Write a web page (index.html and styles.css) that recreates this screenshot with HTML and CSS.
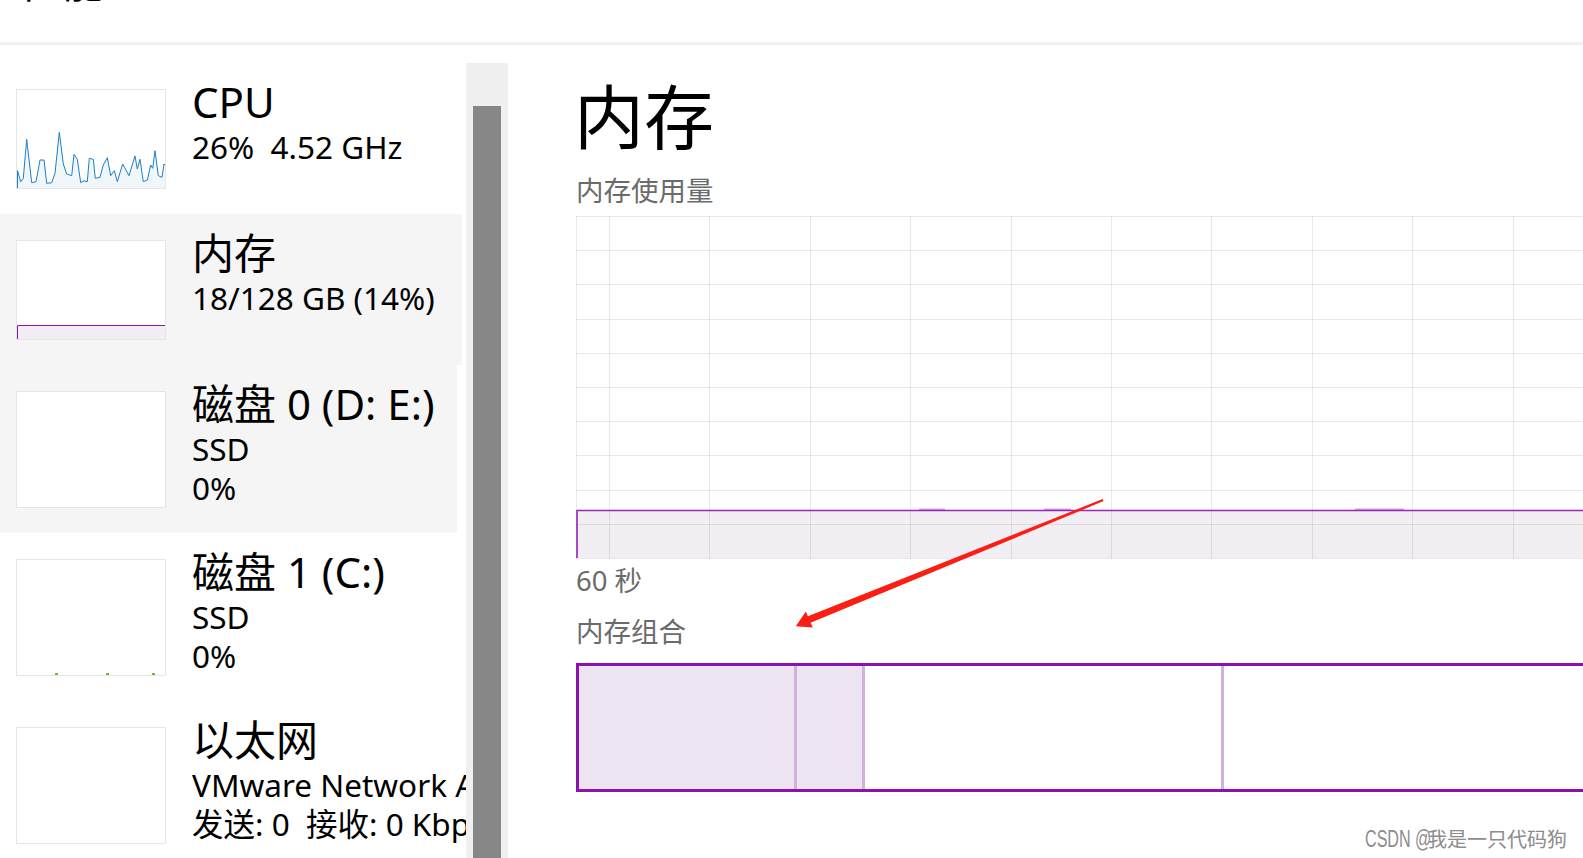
FILE: index.html
```html
<!DOCTYPE html>
<html lang="zh-CN">
<head>
<meta charset="utf-8">
<title>任务管理器 - 性能</title>
<link rel="stylesheet" href="styles.css">
</head>
<body>
<header class="topbar">
  <div class="page-title">性能</div>
</header>
<main class="content">
  <aside class="sidebar">
    <div class="device-list">
      <div class="device">
        <div class="thumb">
          <svg class="thumb-svg" viewBox="0 0 148 98" preserveAspectRatio="none">
            <polygon class="cpu-fill" points="0,80.7 3.7,91.7 6.3,88.3 9.7,49.3 14.7,92.7 19,91.7 23,70 27,70 29.7,93.3 34.7,92.7 38,83.3 42.3,42.3 46.3,74 49.7,84 54.7,85.7 57,64.3 60.3,69.3 63.7,92.7 67,90.7 70.3,91.7 72.3,68.3 76.3,69.3 78.3,88.3 83,87.3 86.3,75 90.3,67.7 93.7,85.7 97.3,80.7 100.3,91.7 105.7,74 112,85.7 118,66 120.3,79 123,69.3 126.3,91.7 130.3,90 133.7,75 135.7,78.3 138,60.7 141.3,85.7 145,87.3 147,74 148,75 148,98 0,98"/>
            <polyline class="cpu-line" points="0.5,98 0.5,80.7 3.7,91.7 6.3,88.3 9.7,49.3 14.7,92.7 19,91.7 23,70 27,70 29.7,93.3 34.7,92.7 38,83.3 42.3,42.3 46.3,74 49.7,84 54.7,85.7 57,64.3 60.3,69.3 63.7,92.7 67,90.7 70.3,91.7 72.3,68.3 76.3,69.3 78.3,88.3 83,87.3 86.3,75 90.3,67.7 93.7,85.7 97.3,80.7 100.3,91.7 105.7,74 112,85.7 118,66 120.3,79 123,69.3 126.3,91.7 130.3,90 133.7,75 135.7,78.3 138,60.7 141.3,85.7 145,87.3 147,74 148,75"/>
          </svg>
        </div>
        <div class="device-text">
          <div class="device-name">CPU</div>
          <div class="device-line">26%&nbsp; 4.52 GHz</div>
        </div>
      </div>

      <div class="device is-selected">
        <div class="thumb">
          <svg class="thumb-svg" viewBox="0 0 148 98" preserveAspectRatio="none">
            <rect class="mem-fill" x="0" y="84.5" width="148" height="14"/>
            <polyline class="mem-line" points="0.5,98 0.5,84.5 148,84.5"/>
          </svg>
        </div>
        <div class="device-text">
          <div class="device-name">内存</div>
          <div class="device-line">18/128 GB (14%)</div>
        </div>
      </div>

      <div class="device is-hover">
        <div class="thumb thumb-tall"></div>
        <div class="device-text">
          <div class="device-name">磁盘 0 (D: E:)</div>
          <div class="device-line">SSD</div>
          <div class="device-line">0%</div>
        </div>
      </div>

      <div class="device">
        <div class="thumb thumb-tall">
          <svg class="thumb-svg" viewBox="0 0 148 115" preserveAspectRatio="none">
            <rect class="disk-dot" x="38" y="113" width="3" height="2"/>
            <rect class="disk-dot" x="89" y="113" width="3" height="2"/>
            <rect class="disk-dot" x="135" y="113" width="3" height="2"/>
          </svg>
        </div>
        <div class="device-text">
          <div class="device-name">磁盘 1 (C:)</div>
          <div class="device-line">SSD</div>
          <div class="device-line">0%</div>
        </div>
      </div>

      <div class="device">
        <div class="thumb thumb-tall"></div>
        <div class="device-text">
          <div class="device-name">以太网</div>
          <div class="device-line">VMware Network Adapter VMnet8</div>
          <div class="device-line">发送: 0&nbsp; 接收: 0 Kbps</div>
        </div>
      </div>
    </div>
    <div class="scrollbar"><div class="scroll-thumb"></div></div>
  </aside>

  <section class="detail">
    <h1 class="detail-title">内存</h1>
    <div class="detail-label">内存使用量</div>
    <svg class="usage-graph" width="1100" height="343" viewBox="0 0 1100 343">
      <rect class="graph-fill" x="0" y="294" width="1100" height="48"/>
      <g class="grid">
        <line x1="0" y1="0.5" x2="1100" y2="0.5"/>
        <line x1="0" y1="34.5" x2="1100" y2="34.5"/>
        <line x1="0" y1="68.5" x2="1100" y2="68.5"/>
        <line x1="0" y1="103.5" x2="1100" y2="103.5"/>
        <line x1="0" y1="137.5" x2="1100" y2="137.5"/>
        <line x1="0" y1="171.5" x2="1100" y2="171.5"/>
        <line x1="0" y1="205.5" x2="1100" y2="205.5"/>
        <line x1="0" y1="239.5" x2="1100" y2="239.5"/>
        <line x1="0" y1="274.5" x2="1100" y2="274.5"/>
        <line x1="0" y1="308.5" x2="1100" y2="308.5"/>
        <line x1="0" y1="342.5" x2="1100" y2="342.5"/>
        <line x1="0.5" y1="0" x2="0.5" y2="343"/>
        <line x1="33.5" y1="0" x2="33.5" y2="343"/>
        <line x1="133.5" y1="0" x2="133.5" y2="343"/>
        <line x1="234.5" y1="0" x2="234.5" y2="343"/>
        <line x1="334.5" y1="0" x2="334.5" y2="343"/>
        <line x1="435.5" y1="0" x2="435.5" y2="343"/>
        <line x1="535.5" y1="0" x2="535.5" y2="343"/>
        <line x1="635.5" y1="0" x2="635.5" y2="343"/>
        <line x1="736.5" y1="0" x2="736.5" y2="343"/>
        <line x1="836.5" y1="0" x2="836.5" y2="343"/>
        <line x1="937.5" y1="0" x2="937.5" y2="343"/>
        <line x1="1037.5" y1="0" x2="1037.5" y2="343"/>
      </g>
      <g class="graph-bumps">
        <line x1="343" y1="293.3" x2="369" y2="293.3"/>
        <line x1="468" y1="293.3" x2="495" y2="293.3"/>
        <line x1="779" y1="293.3" x2="828" y2="293.3"/>
      </g>
      <polyline class="graph-line" points="1,342 1,294.5 1100,294.5"/>
    </svg>
    <div class="axis-label">60 秒</div>
    <div class="detail-label section-label">内存组合</div>
    <div class="composition">
      <div class="seg seg-inuse"></div>
      <div class="seg seg-modified"></div>
      <div class="seg seg-standby"></div>
      <div class="seg seg-free"></div>
    </div>
  </section>
</main>

<svg class="annotation" width="1583" height="858" viewBox="0 0 1583 858">
  <polygon class="arrow" points="1102.6,499.1 807.9,616.3 805.8,611.4 795.8,626.2 812.8,627.6 810.6,622.7 1103.6,501.1"/>
</svg>

<div class="watermark"><span class="wm-latin">CSDN @</span>我是一只代码狗</div>
</body>
</html>
```

FILE: styles.css
```css
* {
  box-sizing: border-box;
}

html,
body {
  margin: 0;
  padding: 0;
}

body {
  position: relative;
  width: 1583px;
  height: 858px;
  overflow: hidden;
  background: #ffffff;
  color: #000000;
  font-family: "Noto Sans", "Noto Sans CJK SC", sans-serif;
}

/* ---------- top bar ---------- */
.topbar {
  height: 45px;
  padding-left: 20px;
  border-bottom: 3px solid #f0f0f0;
  overflow: hidden;
}

.page-title {
  margin-top: -39px;
  font-size: 42px;
  line-height: 42px;
  white-space: nowrap;
}

/* ---------- layout ---------- */
.content {
  display: flex;
  height: 813px;
}

.sidebar {
  display: flex;
  flex: none;
  width: 508px;
  padding-top: 18px;
}

.device-list {
  width: 466px;
  flex: none;
  overflow: hidden;
}

/* ---------- device rows ---------- */
.device {
  display: flex;
  align-items: flex-start;
  padding: 26px 0 25px 16px;
  white-space: nowrap;
}

.device.is-selected {
  margin-right: 4px;
  background: #f5f5f5;
}

.device.is-hover {
  margin-right: 9px;
  background: #f5f5f5;
}

.thumb {
  flex: none;
  width: 150px;
  height: 100px;
  margin-right: 26px;
  background: #ffffff;
  border: 1px solid #e6e6e6;
}

.thumb-tall {
  height: 117px;
}

.thumb-svg {
  display: block;
  width: 100%;
  height: 100%;
}

.cpu-fill {
  fill: #f1f6fb;
}

.cpu-line {
  fill: none;
  stroke: #1b80c6;
  stroke-width: 1;
  stroke-linejoin: round;
}

.mem-fill {
  fill: #f2eff4;
}

.mem-line {
  fill: none;
  stroke: #8b12ae;
  stroke-width: 1;
}

.disk-dot {
  fill: #6fb83a;
}

.device-text {
  margin-top: -12px;
}

.device-name {
  font-size: 42px;
  line-height: 50px;
}

.device-line {
  font-size: 31.5px;
  line-height: 39px;
}

/* ---------- scrollbar ---------- */
.scrollbar {
  flex: none;
  width: 42px;
  background: #f0f0f0;
}

.scroll-thumb {
  width: 28px;
  height: 800px;
  margin: 43px 0 0 7px;
  background: #878787;
}

/* ---------- detail panel ---------- */
.detail {
  flex: 1;
  min-width: 0;
  padding: 37px 0 0 68px;
  overflow: hidden;
}

.detail-title {
  margin: 0 0 0 -2px;
  font-size: 70px;
  font-weight: normal;
  line-height: 70px;
}

.detail-label {
  margin-top: 25px;
  font-size: 27.5px;
  line-height: 28px;
  color: #6b6b6b;
}

.usage-graph {
  display: block;
  margin-top: 11px;
}

.graph-fill {
  fill: #f2eff4;
}

.grid line {
  stroke: rgba(0, 0, 0, 0.085);
  stroke-width: 1;
}

.graph-bumps line {
  stroke: #cfa6dc;
  stroke-width: 1.5;
}

.graph-line {
  fill: none;
  stroke: #9a24bf;
  stroke-width: 1.6;
}

.axis-label {
  margin-top: 8px;
  font-size: 27.5px;
  line-height: 28px;
  color: #6b6b6b;
}

.section-label {
  margin-top: 23px;
}

.composition {
  display: flex;
  width: 1100px;
  height: 129px;
  margin-top: 17px;
  border: 3px solid #8b12ae;
}

.seg {
  height: 100%;
}

.seg-inuse {
  width: 218px;
  background: #ede4f1;
  border-right: 3px solid #d3b0de;
}

.seg-modified {
  width: 68px;
  background: #ede4f1;
  border-right: 3px solid #d3b0de;
}

.seg-standby {
  width: 359px;
  background: #ffffff;
  border-right: 3px solid #d3b0de;
}

.seg-free {
  flex: 1;
  background: #ffffff;
}

/* ---------- overlays ---------- */
.annotation {
  position: absolute;
  left: 0;
  top: 0;
  pointer-events: none;
}

.arrow {
  fill: #fa1e14;
}

.watermark {
  position: absolute;
  right: 16px;
  bottom: 8px;
  display: flex;
  align-items: baseline;
  font-family: "Liberation Sans", "Noto Sans CJK SC", sans-serif;
  font-size: 20px;
  line-height: 20px;
  color: #8c8c8c;
  white-space: nowrap;
  text-shadow: 0 0 1px #ffffff;
}

.wm-latin {
  display: inline-block;
  margin-right: -33px;
  font-size: 23px;
  transform: scaleX(0.7);
  transform-origin: left center;
}
```
